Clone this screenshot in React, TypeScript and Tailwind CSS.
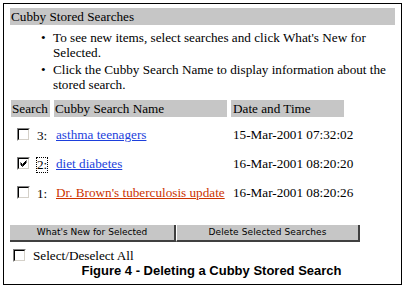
import React from "react";

const serif = { fontFamily: '"Liberation Serif", "Times New Roman", serif' };

function Checkbox({ checked = false }: { checked?: boolean }) {
  return (
    <div className="w-[13px] h-[13px] border border-t-[#808080] border-l-[#808080] border-b-white border-r-white bg-white shrink-0">
      <div className="w-full h-full border border-t-black border-l-black border-b-[#d4d0c8] border-r-[#d4d0c8] relative">
        {checked && (
          <svg viewBox="0 0 9 9" className="absolute left-0 top-0 w-[9px] h-[9px]">
            <path d="M1.5 3.5 L3.5 5.5 L7.5 1.5 M1.5 4.5 L3.5 6.5 L7.5 2.5 M1.5 5.5 L3.5 7.5 L7.5 3.5" stroke="black" strokeWidth="1" fill="none" />
          </svg>
        )}
      </div>
    </div>
  );
}

const rows = [
  { n: "3:", name: "asthma teenagers", date: "15-Mar-2001 07:32:02", checked: false, visited: false, focus: false },
  { n: "2:", name: "diet diabetes", date: "16-Mar-2001 08:20:20", checked: true, visited: false, focus: true },
  { n: "1:", name: "Dr. Brown's tuberculosis update", date: "16-Mar-2001 08:20:26", checked: false, visited: true, focus: false },
];

export default function App() {
  return (
    <div className="w-[406px] h-[286px] bg-white pt-[3px] pl-[3px]" style={serif}>
      <div className="w-[399px] h-[282px] border border-black flex flex-col text-[13.2px] text-black leading-[15px]">
        <div className="mx-[6px] mt-[4px] h-[17px] bg-[#c6c6c6] pl-[1px] flex items-center">Cubby Stored Searches</div>
        <ul className="mt-[5px] pl-[49px] pr-[6px] flex flex-col gap-[2px]">
          <li className="relative">
            <span className="absolute left-[-12px] top-[0px]">•</span>
            To see new items, select searches and click What's New for Selected.
          </li>
          <li className="relative">
            <span className="absolute left-[-12px] top-[0px]">•</span>
            Click the Cubby Search Name to display information about the stored search.
          </li>
        </ul>
        <div className="mt-[8px] ml-[7px] flex gap-[4px] h-[17px]">
          <div className="w-[39px] bg-[#c6c6c6] flex items-center pl-[1px]">Search</div>
          <div className="w-[173px] bg-[#c6c6c6] flex items-center pl-[1px]">Cubby Search Name</div>
          <div className="w-[113px] bg-[#c6c6c6] flex items-center pl-[2px]">Date and Time</div>
        </div>
        <div className="flex flex-col mt-[3px]">
          {rows.map((r) => (
            <div key={r.n} className="h-[29px] flex items-center ml-[7px]">
              <div className="w-[39px] flex items-center pl-[6px] gap-[7px]">
                <Checkbox checked={r.checked} />
                <span className={r.focus ? "outline outline-1 outline-dotted outline-black leading-[14px] mt-[2px]" : "mt-[2px]"}>{r.n}</span>
              </div>
              <div className="w-[181px] pl-[6px]">
                <span className={"underline " + (r.visited ? "text-[#cc3300]" : "text-[#1d3fdc]")}>{r.name}</span>
              </div>
              <div className="pl-[2px]">{r.date}</div>
            </div>
          ))}
        </div>
        <div className="mt-[18px] ml-[6px] flex h-[17px]" style={{ fontFamily: '"DejaVu Sans", Verdana, sans-serif' }}>
          <div className="w-[166px] bg-[#c6c6c6] border-r-2 border-b-2 border-r-[#404040] border-b-[#404040] flex items-center justify-center text-[9px] tracking-[0px]">What's New for Selected</div>
          <div className="w-[184px] bg-[#c6c6c6] border-r-2 border-b-2 border-r-[#404040] border-b-[#404040] border-l border-l-white flex items-center justify-center text-[9px] tracking-[0.1px]">Delete Selected Searches</div>
        </div>
        <div className="mt-[6px] ml-[9px] flex items-center gap-[7px]">
          <Checkbox />
          <span>Select/Deselect All</span>
        </div>
        <div className="text-center pl-[18px] font-bold text-[13px] leading-[14px] mt-[1px]" style={{ fontFamily: '"Liberation Sans", Arial, sans-serif' }}>
          Figure 4 - Deleting a Cubby Stored Search
        </div>
      </div>
    </div>
  );
}
